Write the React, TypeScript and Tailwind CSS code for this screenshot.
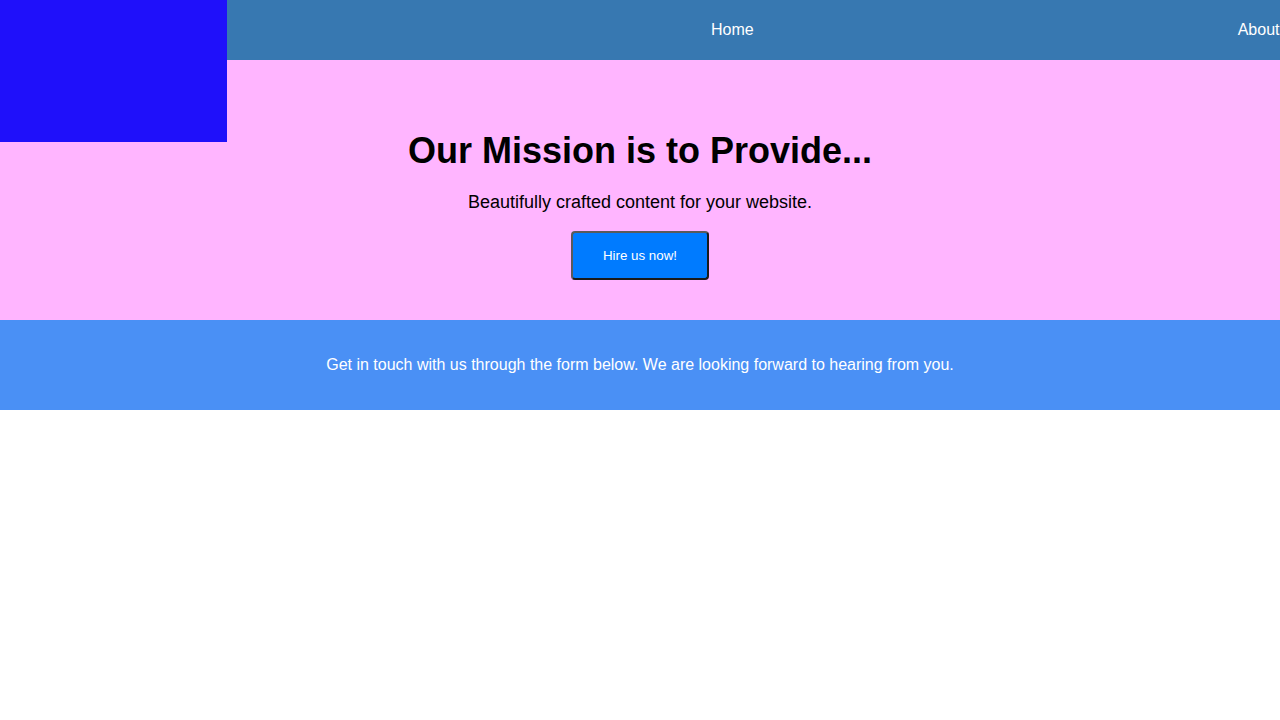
export default function App() {
    return (
        <div className="relative min-h-[720px] w-[1280px] overflow-hidden bg-white font-['Liberation_Sans',Arial,sans-serif]">

            {/* logo block sits over the nav and the hero */}
            <div className="absolute left-0 top-0 z-10 h-[142px] w-[227px] bg-[#1f10fa]" />

            <nav className="flex h-[60px] items-center bg-[#3778b1] pl-[711px] text-base text-white">
                <ul className="flex gap-[484px] whitespace-nowrap">
                    <li>Home</li>
                    <li>About</li>
                </ul>
            </nav>

            <section className="flex flex-col items-center bg-[#ffb5ff] pt-[71px] pb-10 text-black">
                <h1 className="text-4xl font-bold leading-10">
                    Our Mission is to Provide...
                </h1>
                <p className="mt-[17px] text-lg leading-7">
                    Beautifully crafted content for your website.
                </p>
                <button className="mt-[15px] rounded-[4px] border-2 border-t-[#5a5a5a] border-l-[#5a5a5a] border-b-[#1a1a1a] border-r-[#1a1a1a] bg-[#007bff] px-[30px] py-[15px] text-[13.33px] leading-[15px] text-white">
                    Hire us now!
                </button>
            </section>

            <section className="bg-[#4a90f5] py-[33px] text-center text-base leading-6 text-white">
                <p>Get in touch with us through the form below. We are looking forward to hearing from you.</p>
            </section>

        </div>
    );
}
